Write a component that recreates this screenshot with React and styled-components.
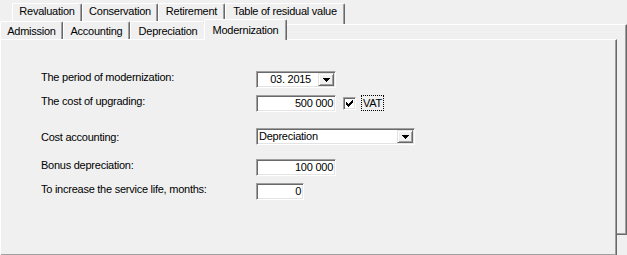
import React from 'react';
import styled, { createGlobalStyle } from 'styled-components';

const Global = createGlobalStyle`
  html, body { margin: 0; padding: 0; background: #f0f0f0; }
  body { font-family: "Liberation Sans", Arial, sans-serif; font-size: 11px; color: #000; }
`;

const Root = styled.div`
  width: 627px;
  height: 255px;
  overflow: hidden;
  background: #f0f0f0;
  padding-top: 3px;
  box-sizing: border-box;
  letter-spacing: -0.25px;
`;

const BackRow = styled.div`
  display: flex;
  align-items: flex-start;
  padding-left: 12px;
  height: 21px;
`;

const FrontRow = styled.div`
  display: flex;
  align-items: flex-start;
  height: 18px;
  margin-top: -4px;
`;

const Tab = styled.div`
  box-sizing: border-box;
  flex: none;
  width: ${(p) => p.$w}px;
  height: ${(p) => p.$h}px;
  margin-left: ${(p) => p.$ml || 0}px;
  margin-top: ${(p) => p.$mt || 0}px;
  padding-top: ${(p) => p.$pt}px;
  border-left: 1px solid #fff;
  border-top: 1px solid #fff;
  border-right: 1px solid #696969;
  box-shadow: inset -1px 0 #a0a0a0;
  border-radius: 2px 2px 0 0;
  background: #f0f0f0;
  text-align: center;
  line-height: 15px;
  white-space: nowrap;
  ${(p) => (p.$active ? 'position: relative; z-index: 1;' : '')}
`;

const OuterFrame = styled.div`
  box-sizing: border-box;
  width: 627px;
  height: 211px;
  border-top: 1px solid #fff;
  border-right: 1px solid #696969;
  border-bottom: 1px solid #696969;
  box-shadow: inset -1px -1px #a0a0a0;
`;

const Panel = styled.div`
  box-sizing: border-box;
  width: 617px;
  height: 217px;
  border-top: 1px solid #fff;
  border-left: 1px solid #fff;
  border-right: 1px solid #696969;
  border-bottom: 1px solid #696969;
  box-shadow: inset -1px -1px #a0a0a0;
  background: #f0f0f0;
  padding: 31px 0 0 40px;
`;

const Field = styled.div`
  display: flex;
  align-items: flex-start;
  margin-top: ${(p) => p.$mt || 0}px;
`;

const Label = styled.div`
  width: 215px;
  flex: none;
  line-height: 13px;
  margin-top: ${(p) => p.$off || 0}px;
  white-space: nowrap;
`;

const Sunken = styled.div`
  box-sizing: border-box;
  flex: none;
  display: flex;
  align-items: stretch;
  width: ${(p) => p.$w}px;
  height: 17px;
  border: 1px solid;
  border-color: #a0a0a0 #fff #fff #a0a0a0;
  box-shadow: inset 1px 1px #696969, inset -1px -1px #e3e3e3;
  background: #fff;
  padding: 1px;
`;

const Value = styled.div`
  flex: 1;
  line-height: 13px;
  text-align: ${(p) => p.$align || 'right'};
  padding: ${(p) => p.$pad || '0 1px 0 0'};
  white-space: nowrap;
`;

const DropBtn = styled.div`
  box-sizing: border-box;
  flex: none;
  width: 16px;
  border: 1px solid;
  border-color: #e3e3e3 #696969 #696969 #e3e3e3;
  box-shadow: inset 1px 1px #fff, inset -1px -1px #a0a0a0;
  background: #f0f0f0;
  display: flex;
  align-items: center;
  justify-content: center;
`;

const CheckBox = styled.div`
  box-sizing: border-box;
  flex: none;
  width: 13px;
  height: 13px;
  margin: 2px 0 0 7px;
  border: 1px solid;
  border-color: #a0a0a0 #fff #fff #a0a0a0;
  box-shadow: inset 1px 1px #696969, inset -1px -1px #e3e3e3;
  background: #fff;
  display: flex;
  align-items: center;
  justify-content: center;
`;

const CheckLabel = styled.div`
  box-sizing: border-box;
  height: 16px;
  margin-left: 5px;
  padding: 0 1px;
  border: 1px dotted #000;
  line-height: 14px;
`;

const Arrow = () => (
  <svg width="7" height="4" viewBox="0 0 7 4" shapeRendering="crispEdges">
    <rect x="0" y="0" width="7" height="1" fill="#000" />
    <rect x="1" y="1" width="5" height="1" fill="#000" />
    <rect x="2" y="2" width="3" height="1" fill="#000" />
    <rect x="3" y="3" width="1" height="1" fill="#000" />
  </svg>
);

const Check = () => (
  <svg width="7" height="7" viewBox="0 0 7 7" shapeRendering="crispEdges">
    {[2, 3, 4, 3, 2, 1, 0].map((y, x) => (
      <rect key={x} x={x} y={y} width="1" height="3" fill="#000" />
    ))}
  </svg>
);

const backTabs = [
  ['Revaluation', 70],
  ['Conservation', 76],
  ['Retirement', 67],
  ['Table of residual value', 120],
];

const frontTabs = [
  ['Admission', 63],
  ['Accounting', 67],
  ['Depreciation', 76],
];

export default function App() {
  return (
    <>
      <Global />
      <Root>
        <BackRow>
          {backTabs.map(([t, w]) => (
            <Tab key={t} $w={w} $h={21} $pt={0}>
              {t}
            </Tab>
          ))}
        </BackRow>
        <OuterFrame>
          <FrontRow>
            {frontTabs.map(([t, w]) => (
              <Tab key={t} $w={w} $h={18} $pt={2}>
                {t}
              </Tab>
            ))}
            <Tab $w={83} $h={21} $pt={3} $ml={-2} $mt={-2} $active>
              Modernization
            </Tab>
          </FrontRow>
          <Panel>
            <Field>
              <Label>The period of modernization:</Label>
              <Sunken $w={80}>
                <Value $pad="0 7px 0 0">03. 2015</Value>
                <DropBtn>
                  <Arrow />
                </DropBtn>
              </Sunken>
            </Field>
            <Field $mt={7}>
              <Label>The cost of upgrading:</Label>
              <Sunken $w={80}>
                <Value>500 000</Value>
              </Sunken>
              <CheckBox>
                <Check />
              </CheckBox>
              <CheckLabel>VAT</CheckLabel>
            </Field>
            <Field $mt={16}>
              <Label $off={3}>Cost accounting:</Label>
              <Sunken $w={159}>
                <Value $align="left" $pad="0 0 0 1px">Depreciation</Value>
                <DropBtn>
                  <Arrow />
                </DropBtn>
              </Sunken>
            </Field>
            <Field $mt={14}>
              <Label>Bonus depreciation:</Label>
              <Sunken $w={80}>
                <Value>100 000</Value>
              </Sunken>
            </Field>
            <Field $mt={7}>
              <Label>To increase the service life, months:</Label>
              <Sunken $w={48}>
                <Value>0</Value>
              </Sunken>
            </Field>
          </Panel>
        </OuterFrame>
      </Root>
    </>
  );
}
